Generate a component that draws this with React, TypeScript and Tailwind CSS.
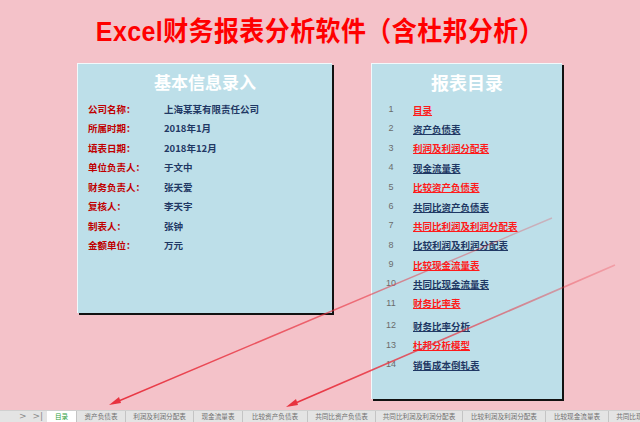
import React from 'react';

const cjk = { fontFamily: '"Noto Sans CJK SC", "Liberation Sans", sans-serif' };

const info = [
  { label: '公司名称：', value: '上海某某有限责任公司' },
  { label: '所属时期：', value: '2018年1月' },
  { label: '填表日期：', value: '2018年12月' },
  { label: '单位负责人：', value: '于文中' },
  { label: '财务负责人：', value: '张天爱' },
  { label: '复核人：', value: '李天宇' },
  { label: '制表人：', value: '张钟' },
  { label: '金额单位：', value: '万元' },
];

const reports = [
  '目录',
  '资产负债表',
  '利润及利润分配表',
  '现金流量表',
  '比较资产负债表',
  '共同比资产负债表',
  '共同比利润及利润分配表',
  '比较利润及利润分配表',
  '比较现金流量表',
  '共同比现金流量表',
  '财务比率表',
  '财务比率分析',
  '杜邦分析模型',
  '销售成本倒轧表',
];

const tabs = [
  { name: '资产负债表', w: 'w-[49px]' },
  { name: '利润及利润分配表', w: 'w-[68px]' },
  { name: '现金流量表', w: 'w-[49px]' },
  { name: '比较资产负债表', w: 'w-[65px]' },
  { name: '共同比资产负债表', w: 'w-[68px]' },
  { name: '共同比利润及利润分配表', w: 'w-[87px]' },
  { name: '比较利润及利润分配表', w: 'w-[83px]' },
  { name: '比较现金流量表', w: 'w-[63px]' },
  { name: '共同比现金流量表', w: 'w-[68px]' },
];

const Arrows = () => (
  <svg className="absolute inset-0 pointer-events-none" width="640" height="422" viewBox="0 0 640 422">
    <defs>
      <linearGradient id="fade1" gradientUnits="userSpaceOnUse" x1="552" y1="218" x2="110" y2="405">
        <stop offset="0" stopColor="#e8323f" stopOpacity="0.25" />
        <stop offset="0.45" stopColor="#e8323f" stopOpacity="0.6" />
        <stop offset="1" stopColor="#e8323f" stopOpacity="1" />
      </linearGradient>
      <linearGradient id="fade2" gradientUnits="userSpaceOnUse" x1="615" y1="265" x2="287" y2="407">
        <stop offset="0" stopColor="#e8323f" stopOpacity="0.25" />
        <stop offset="0.5" stopColor="#e8323f" stopOpacity="0.7" />
        <stop offset="1" stopColor="#e8323f" stopOpacity="1" />
      </linearGradient>
    </defs>
    <line x1="552" y1="218" x2="114" y2="403" stroke="url(#fade1)" strokeWidth="1.4" />
    <polygon points="109,405 119,397 121,403" fill="#e8323f" />
    <line x1="615" y1="265" x2="291" y2="405" stroke="url(#fade2)" strokeWidth="1.8" />
    <polygon points="286,407 296,399 298,405" fill="#e8323f" />
  </svg>
);

export default function App() {
  return (
    <div className="relative w-[640px] h-[422px] overflow-hidden bg-[#f4c2c9] flex flex-col" style={cjk}>
      {/* Title */}
      <div className="h-[63px] flex justify-center pt-[14px]">
        <h1 className="text-[25px] leading-[32px] font-bold text-[#ff0000] scale-y-110 tracking-[0.4px]">
          <span style={{ fontFamily: '"Liberation Sans", sans-serif' }}>Excel</span>财务报表分析软件（含杜邦分析）
        </h1>
      </div>

      <div className="flex items-start pl-[77px] h-[347px]">
        {/* Basic info panel */}
        <div className="w-[255px] h-[250px] bg-[#bddfe9] border-t border-l border-white/80 shadow-[2px_2px_0_#111]">
          <div className="h-[35px] flex items-center justify-center text-[17px] font-bold text-white">基本信息录入</div>
          {info.map((r) => (
            <div key={r.label} className="h-[19.5px] flex items-center text-[9.5px] font-bold">
              <span className="w-[86px] pl-[10px] text-[#c00000]">{r.label}</span>
              <span className="text-[#1f3864]">{r.value}</span>
            </div>
          ))}
        </div>

        {/* Report index panel */}
        <div className="ml-[39px] w-[191px] h-[336px] bg-[#bddfe9] border-t border-l border-white/80 shadow-[2px_2px_0_#111]">
          <div className="h-[36px] flex items-center justify-center text-[18px] font-bold text-white">报表目录</div>
          {reports.map((r, i) => (
            <div key={r} className={`h-[19.4px] flex items-center ${i === 11 ? 'mt-[3px]' : ''}`}>
              <span className="w-[38px] text-center text-[9px] text-[#6b6b6b]" style={{ fontFamily: '"Liberation Sans", sans-serif' }}>
                {i + 1}
              </span>
              <span className={`pl-[3px] text-[9.5px] font-bold underline underline-offset-[1px] ${i % 2 === 0 ? 'text-[#ff1a1a]' : 'text-[#1f3864]'}`}>
                {r}
              </span>
            </div>
          ))}
        </div>
      </div>

      {/* Sheet tabs */}
      <div className="h-[12px] flex bg-[#e4e4e4] text-[6.6px] leading-[11px] text-[#707070] border-t border-[#d0d0d0]">
        <div className="w-[47px] shrink-0 flex items-center gap-[6px] pl-[19px] text-[9px] leading-[11px] text-[#8a8a8a]" style={{ fontFamily: '"DejaVu Sans", sans-serif' }}>
          <span>&gt;</span>
          <span>&gt;|</span>
        </div>
        <div className="w-[29px] shrink-0 bg-white text-center text-[#2e9e3e]">目录</div>
        {tabs.map((t) => (
          <div key={t.name} className={`${t.w} shrink-0 text-center border-l border-[#c4c4c4] whitespace-nowrap overflow-hidden`}>
            {t.name}
          </div>
        ))}
      </div>

      <Arrows />
    </div>
  );
}
